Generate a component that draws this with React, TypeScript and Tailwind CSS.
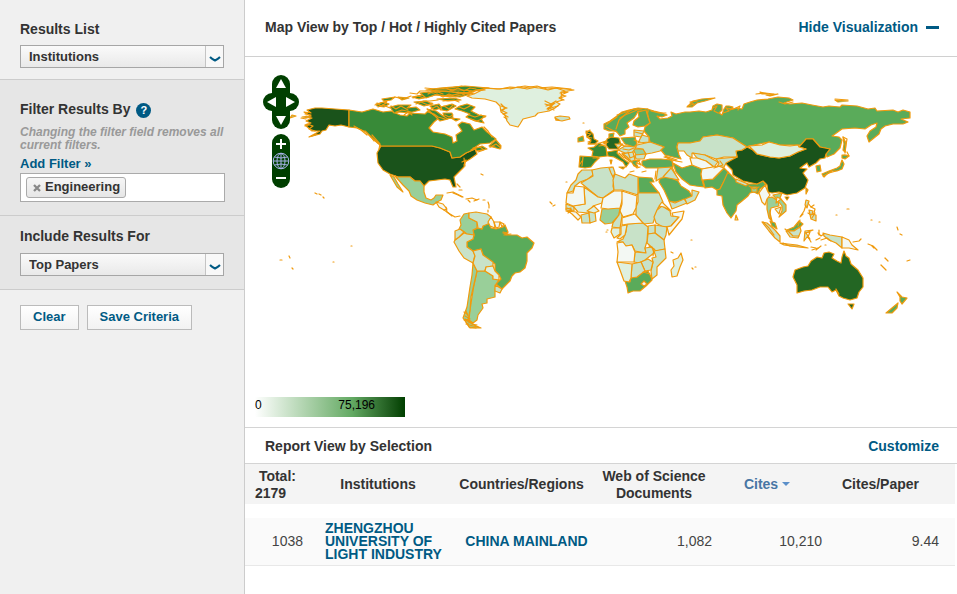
import { ChangeEvent, ReactNode, useState } from "react";

const TOP = "#1a531b";
const HIGH = "#236623";
const STRONG = "#388a38";
const MID = "#5aab5a";
const SOFT = "#99cf99";
const LIGHT = "#c8e2c8";
const PALE = "#dff0df";
const FAINT = "#f3f8f3";
const BORDER = "#f09a0c";

type Region = { fill: string; shapes: string[] };

const regions: Region[] = [
  {
    fill: MID,
    shapes: [
      // Russia
      "647,109 654,111 662,113 667,115 662,117 657,116 660,119 668,118 672,116 671,112 676,114 685,112 690,112 699,111 706,112 712,110 713,106 717,104 722,105 722,110 719,113 722,115 724,109 726,106 729,106 733,107 730,110 736,108 742,109 744,104 750,102 757,100 768,99 778,97 789,98 793,100 784,103 790,104 802,103 812,105 823,107 829,106 840,107 842,105 857,106 868,109 875,108 877,111 893,110 898,112 903,110 910,112 910,118 901,119 908,122 903,124 893,124 885,126 881,129 879,134 874,138 869,142 867,136 870,131 876,127 877,123 871,125 865,129 855,128 842,129 835,134 832,136 839,137 842,140 840,148 834,154 827,157 826,154 830,149 820,147 813,139 806,139 802,145 780,145 769,142 749,146 747,147 733,138 717,135 703,137 700,141 690,143 678,143 677,147 679,155 681,159 665,155 660,149 664,147 650,142 649,137 644,131 645,127 650,123 648,116",
      "687,107 693,101 702,99 715,98 705,101 697,103 692,107",
      "760,92 768,94 762,94", "766,95 778,94 770,96", "835,100 848,101 838,102",
      "843,137 846,143 845,152 843,150 844,144",
      // Scandinavia
      "604,124 610,121 617,116 622,112 629,110 638,108 648,109 648,112 638,111 636,115 634,118 627,123 629,127 625,130 625,134 620,136 616,131 609,131 604,129",
      "638,112 646,110 648,117 650,123 645,126 638,127 633,125 634,121 639,117",
      "609,134 614,133 613,138 609,138",
      // Poland, Ukraine side, Turkey
      "621,138 635,137 637,144 634,147 625,144",
      "642,161 650,159 661,159 672,160 673,167 664,168 655,168 646,168 642,165",
      // Egypt
      "638,177 652,178 654,182 650,182 659,193 639,193",
      // Saudi Arabia
      "660,178 669,177 678,181 681,186 689,191 692,196 688,199 675,202 669,201 664,190 659,182",
      // Iran
      "673,163 682,168 692,165 702,169 701,174 702,180 704,187 696,186 690,185 682,179 676,172",
      // Pakistan and India
      "703,180 713,179 721,171 724,168 728,172 729,178 723,183 720,189 717,190 712,187 705,188",
      "728,172 733,177 736,180 748,184 757,184 763,181 766,185 760,189 758,194 754,192 750,193 748,196 742,201 737,205 736,211 731,218 727,213 723,205 722,196 717,195 717,190 720,189 723,183",
      // Japan and Korea
      "842,155 846,155 849,156 845,159 842,158",
      "842,160 844,164 842,169 837,171 832,171 827,174 824,177 822,174 829,171 837,168 840,166",
      "816,166 820,165 821,171 817,172", "806,188 808,190 806,194",
      // Brazil
      "483,226 489,223 491,228 496,229 503,227 505,225 508,232 506,235 517,235 522,238 527,237 534,243 532,248 527,253 527,261 525,268 520,272 515,273 512,276 510,281 502,289 496,284 501,279 499,275 495,271 495,264 489,260 483,255 481,249 473,251 467,247 467,242 473,239 474,235 473,230 478,228 482,229",
      // South Africa
      "625,281 630,282 631,277 637,277 641,273 648,271 651,277 652,280 646,286 640,291 633,291 628,293 627,287",
      // New Zealand
      "897,292 902,297 907,298 902,304 900,301 900,297", "898,303 897,308 892,313 886,313 892,308",
      // Malaysia
      "770,221 775,223 777,229 772,226", "787,230 794,227 799,221 803,224 800,227 793,231",
      "578,138 583,136 584,141 578,142", "631,161 640,160 636,163 638,167 634,166",
    ],
  },
  {
    fill: TOP,
    shapes: [
      // Alaska
      "304,112 311,113 307,110 315,108 322,108 335,109 349,110 349,127 341,125 335,126 329,125 326,130 322,131 320,134 309,137 320,131 312,131 305,125 311,123 306,121 312,118 302,117 311,116",
      // Contiguous United States
      "381,146 432,146 440,148 450,152 452,158 460,157 466,153 475,149 477,154 470,159 465,162 464,167 459,172 454,177 456,187 453,187 450,180 445,179 437,180 429,181 424,186 420,181 415,181 410,177 398,177 390,174 383,170 378,163 377,153",
      // China
      "725,163 732,159 737,157 736,151 742,150 747,147 753,150 757,154 770,157 779,158 790,156 798,152 806,149 799,147 806,139 813,139 820,147 830,149 826,154 825,158 820,159 816,163 809,167 807,163 800,168 807,169 803,173 808,180 805,188 797,193 787,195 779,192 772,193 768,192 767,185 763,181 757,184 743,181 733,175 732,170",
      "785,197 789,197 787,200",
    ],
  },
  {
    fill: HIGH,
    shapes: [
      "795,270 803,267 808,266 811,261 817,257 822,258 824,253 829,252 834,254 832,258 837,261 841,263 842,257 844,251 846,256 849,258 851,264 858,270 863,278 863,287 859,292 857,298 850,300 843,298 839,296 836,290 832,292 828,287 820,287 812,290 804,291 797,293 797,285 793,277",
      "848,304 854,304 852,309",
      "607,139 611,137 619,138 621,145 618,149 609,149 606,145",
      "590,131 593,134 594,139 598,141 595,144 588,144 591,140 587,137 586,131",
    ],
  },
  {
    fill: STRONG,
    shapes: [
      // Canada
      "349,110 362,112 373,109 383,112 391,111 400,115 407,116 410,113 425,114 428,111 434,115 440,117 434,122 429,128 433,132 445,134 452,137 453,143 457,141 456,135 462,131 458,125 462,122 470,124 474,130 482,127 487,132 496,139 490,143 480,144 471,150 482,146 487,149 477,151 475,149 466,153 460,157 452,158 450,152 440,148 432,146 381,146 373,139 366,132 357,128 349,127",
      "489,146 496,140 501,146 500,149",
      // Baffin and the Arctic islands
      "460,106 467,104 475,107 471,111 479,115 486,116 481,119 484,123 475,121 466,117 470,114 462,111 455,109",
      "390,107 398,105 411,105 407,108 416,107 420,110 409,113 400,112 394,113",
      "376,104 384,102 389,104 384,107 377,106", "382,99 395,97 391,100 384,101", "398,97 409,98 402,100",
      "412,97 422,95 428,97 419,99", "414,102 426,101 433,104 424,106", "437,99 454,98 461,100 448,101",
      "420,93 438,91 452,92 462,94 448,96 435,95 426,98", "426,90 440,88 465,86 489,88 477,90 470,93 455,92 440,91",
      "446,96 465,93 474,93 460,97", "430,106 439,104 442,108 434,110", "441,107 452,104 456,106 447,111 442,110",
      "443,113 452,113 453,118 445,119", "427,109 436,111 443,116 448,119 440,121 435,116", "451,118 460,119 456,121",
      // France, Iberia, Italy
      "588,148 594,147 599,143 606,147 607,156 599,157 592,156 593,151",
      "580,156 596,157 599,158 595,162 591,167 585,168 579,167",
      "607,152 618,150 617,153 622,158 629,163 626,167 623,162 614,157 608,156",
      "610,160 612,160 611,164", "619,167 625,167 623,169",
    ],
  },
  {
    fill: SOFT,
    shapes: [
      // Mexico
      "395,176 398,177 410,177 415,181 420,181 424,186 424,192 426,198 431,200 434,198 436,195 443,195 441,200 437,202 433,205 425,203 417,200 411,196 409,191 403,185",
      "390,175 394,177 398,184 403,192 397,187",
      // Colombia
      "460,220 464,214 469,213 469,218 477,222 477,228 473,230 474,235 467,234 463,231 459,229 461,225",
      // Argentina
      "477,271 485,271 493,276 493,279 499,280 496,284 495,291 495,297 487,299 487,303 482,304 483,308 478,315 477,320 473,323 469,320 470,310 472,297 474,285",
      // Chile
      "473,263 477,271 474,284 471,297 470,310 468,320 474,325 481,328 470,328 463,318 467,307 470,287 472,275",
      // Nigeria, Thailand, Romania
      "602,209 620,208 619,215 612,223 605,224 600,220",
      "767,198 772,197 778,201 779,206 771,208 770,213 772,221 769,218 767,209",
      "633,149 643,149 646,154 636,155", "751,187 757,187 757,192 752,192",
      "306,116 311,117 306,118", "292,115 296,116 290,118",
      "773,195 782,193 780,198 786,205 786,211 779,217 782,211 782,206 778,201",
    ],
  },
  {
    fill: LIGHT,
    shapes: [
      // Kazakhstan and neighbours
      "677,147 678,143 690,143 700,141 703,137 717,135 733,138 747,147 742,150 736,151 737,157 724,157 716,159 705,155 697,154 692,153 692,158 687,155 684,151 678,151",
      "716,159 737,157 726,163 724,167 717,167 719,163",
      "693,153 705,155 718,162 714,167 706,161 697,158",
      // Morocco, Algeria, Tunisia, Libya
      "582,170 592,170 593,175 588,179 580,182 575,186 573,191 567,193 571,185 576,180 578,174",
      "592,170 601,168 612,167 612,173 614,180 613,186 614,190 603,198 598,197 581,183 593,176",
      "609,168 613,167 615,173 613,177 611,173",
      "615,174 625,178 629,174 638,177 638,195 622,190 614,190 613,180",
      // Sudan, Ethiopia, Kenya, Tanzania
      "638,193 659,193 663,202 658,208 656,214 653,223 643,224 636,215 636,207 638,202",
      "657,210 662,206 670,211 671,216 679,217 671,226 663,227 656,223 654,217",
      "655,225 667,227 666,235 664,240 655,233", "648,226 655,225 655,233 648,234",
      "648,234 655,233 664,240 665,249 656,251 647,243",
      // DR Congo
      "627,224 643,223 648,227 647,241 645,248 646,253 635,251 632,245 625,246 623,242 617,242 623,239 626,232",
      "635,252 646,253 645,248 652,247 654,253 645,260 639,263 634,262",
      "654,251 665,249 666,258 657,267 657,275 652,279 651,271 653,262 652,258 656,257",
      "641,262 648,259 653,262 651,270 645,271", "632,264 641,262 645,271 637,277 631,278",
      "581,215 589,213 590,223 582,223", "589,212 595,212 596,221 590,223",
      "620,208 622,216 620,228 612,227 613,223 619,215", "566,204 574,207 574,211 566,210",
      // Levant, Iraq, Yemen, Oman
      "658,168 672,167 678,180 669,177 661,178 656,181", "663,177 671,168 679,180",
      "669,201 675,203 684,199 687,203 672,209", "692,190 699,192 695,200 687,204 685,199 692,196",
      // Eastern Europe
      "637,145 650,142 664,147 660,151 652,153 646,154 643,149 635,148", "642,135 649,137 649,142 638,143",
      "634,130 644,131 641,137 634,136", "618,150 625,146 636,147 632,153 625,153", "622,154 633,152 635,160 630,162",
      "635,155 646,154 644,159 636,159", "615,144 623,144 618,148",
      "665,156 677,160 672,161",
      // Peru, Bolivia, Venezuela
      "455,240 459,237 464,233 467,234 474,235 473,239 467,242 467,247 473,251 475,255 473,263 464,258 459,251 454,242",
      "455,231 460,229 464,232 459,237 455,240",
      "473,251 481,249 483,255 493,262 493,266 486,267 485,271 477,271 473,263 475,256",
      "469,213 476,212 487,214 491,217 488,224 483,226 482,229 478,228 477,222 469,218",
      "495,285 502,289 500,293 495,291",
      // Indonesia and the Philippines
      "762,222 767,223 775,230 780,236 780,242 775,238 769,231", "780,243 788,244 797,245 808,248 798,247 784,245",
      "786,231 794,231 800,227 801,231 798,238 790,237", "805,231 813,230 806,233 810,239 807,237 804,241",
      "823,233 830,235 842,237 842,248 836,243 829,240 824,236",
      "806,200 809,201 807,208 805,205", "809,210 813,211 812,214 816,215 816,221 811,219",
      "555,117 560,116 569,117 570,119 562,121 556,120", "736,215 738,220 735,220", "736,179 748,184 746,186 736,182",
    ],
  },
  {
    fill: PALE,
    shapes: [
      // Greenland
      "467,96 474,94 480,91 487,88 500,89 510,87 523,88 537,86 547,89 557,88 574,90 561,92 562,96 559,98 563,100 556,102 560,104 555,108 549,111 538,113 535,116 523,119 520,124 518,127 510,125 507,121 505,115 501,112 500,106 496,102 485,99 472,98",
      // Mongolia
      "749,146 762,145 769,142 780,145 790,146 798,145 799,147 806,149 798,152 790,156 779,158 770,157 757,154 753,150",
      "584,187 598,197 603,198 602,203 593,206 588,213 578,212 573,206 585,204",
      "617,262 632,264 631,278 629,282 624,281 620,270",
      "681,253 683,260 680,267 677,276 672,277 671,270 674,266 673,260 678,258",
      "612,228 620,228 620,234 614,238 611,232", "493,276 485,271 486,267 493,266 495,271 499,275 499,280 493,279",
      "775,209 781,207 779,214", "621,226 627,225 625,235 620,239 617,238 621,234", "587,211 594,206 599,211 594,213",
    ],
  },
  {
    fill: FAINT,
    shapes: [
      "575,186 584,187 585,204 573,206 566,203 567,193 573,193",
      "603,198 614,191 622,191 623,197 620,208 608,209 601,208",
      "622,191 637,196 636,208 633,214 623,217 620,211 622,204",
      "622,218 635,214 643,223 628,224 622,225", "617,243 623,242 626,246 632,245 635,252 634,262 617,262 618,252",
      "672,213 684,211 682,219 669,235 667,227 671,226 679,217 673,216",
      "690,158 697,158 706,161 714,167 702,169 692,165", "702,169 718,166 724,168 721,171 713,179 702,180 701,174",
      "759,193 765,185 768,192 770,195 767,199 765,205 762,202", "842,237 849,240 852,245 858,250 849,248 842,248",
      "491,217 494,222 495,228 490,226 488,222", "494,222 500,222 499,227 496,228", "500,222 504,224 502,227",
      "436,202 443,204 447,209 444,210 439,207", "641,284 644,281 647,284 644,286", "659,206 662,202 671,211 664,207",
      "568,211 576,212 581,217 578,220 572,214", "776,203 781,199 777,197",
    ],
  },
];

// Borders and island specks that carry no fill of their own
const specks: string[] = [
  "315,193 317,194", "319,194 321,195", "323,197 324,198", "481,174 483,175", "457,184 460,187", "459,190 462,190",
  "447,193 453,192 459,195 463,197", "453,193 458,195 462,197", "466,199 472,198 477,200", "474,201 479,199", "468,200 470,202", "483,200 485,200",
  "488,202 489,205 489,208", "488,210 488,212", "444,210 450,214 455,217 460,216", "446,207 447,212 452,216",
  "351,246 352,246", "289,256 290,258", "280,260 282,260", "333,262 334,262", "292,268 293,269",
  "550,202 552,204", "553,206 555,205", "566,182 567,182", "566,209 571,208 570,212 567,211", "566,211 570,212",
  "583,123 584,123", "583,157 582,166", "593,158 599,158", "607,230 608,230", "606,232 607,232", "691,240 692,240", "671,252 673,253", "692,268 693,269", "695,267 696,267",
  "806,205 804,211 800,217", "803,214 801,216", "811,207 815,209 814,213", "847,209 849,209", "836,215 837,215", "871,220 872,220", "879,222 880,222",
  "897,227 898,230", "900,234 902,235", "868,244 873,246 877,250", "872,246 874,248", "881,265 886,270", "885,258 888,261", "907,261 910,260",
  "819,230 819,235", "816,240 820,238", "811,247 816,248", "821,240 827,238 831,241", "853,242 859,241 861,239", "825,245 826,245", "816,250 821,246",
  "756,94 765,93 774,94", "835,99 848,100", "843,137 847,139 846,145 845,153", "844,155 849,156 847,152",
  "372,135 380,144 379,149", "365,131 371,137 374,141", "354,126 361,130 367,135", "371,137 378,143",
  "467,94 476,90 484,89", "484,88 497,89 512,88 525,86 538,88 552,87 571,89", "501,106 507,108 501,110 507,113 503,114 508,117",
  "560,93 568,92 561,95 566,96 560,98 564,100", "546,106 555,103 547,109 558,106", "504,117 507,119", "545,104 552,106 548,110",
  "465,316 470,319 464,320 471,322 466,324 473,326 478,327", "466,322 469,327 476,328", "464,312 467,314",
  "503,233 507,234 504,235 511,234", "617,115 626,112 634,109 642,110", "617,117 611,121 606,125", "616,129 619,120 627,113 631,110",
  "651,111 659,113 666,113", "375,105 381,103 387,101 385,104", "395,97 403,99 411,96", "410,93 417,94 420,91 428,91", "428,94 436,90 446,90 455,89",
  "423,101 430,101 438,100", "425,88 436,89 450,88 462,86", "440,95 450,97 462,95 470,92", "450,90 462,90 474,91 485,90", "443,101 454,100 459,102",
  "555,118 559,120 556,120", "305,126 309,125", "301,118 306,119", "312,136 317,134", "582,161 580,164",
  "770,210 770,217 772,222", "800,220 798,226", "836,289 839,294", "464,158 465,166", "490,147 495,146", "599,146 606,145", "600,143 606,141",
  "664,157 670,159 676,161 682,162", "637,163 641,165 638,160", "642,172 646,171", "630,172 634,171", "656,171 655,179", "714,168 723,165 720,161",
];

// Short strokes that break up the most indented coasts
const inlets: string[] = [
  "428,92 433,93 438,92 443,94", "446,88 452,91 458,88 464,91 470,88 476,89", "432,96 437,94 443,97 449,94 456,97", "458,92 464,94 471,91",
  "377,103 381,106 386,103", "378,107 383,105 390,108", "391,106 396,109 401,106 408,110", "396,112 402,110 411,112", "404,115 408,112 412,115",
  "413,98 418,96 424,98", "416,104 421,102 428,105 432,103", "431,109 437,106 441,110", "444,106 449,109 453,105", "428,112 434,114 438,117 445,119",
  "459,107 464,109 470,106", "469,115 475,117 481,115 485,117", "471,119 477,121 482,119", "445,115 449,117 453,115",
  "473,148 480,147 484,150 478,152", "490,147 496,144 501,148", "462,162 466,160 464,165", "484,127 488,131 492,137",
  "590,130 586,133 591,134 587,137 592,138", "588,142 591,141 589,144 597,144", "603,143 606,141 604,144 608,142",
  "619,143 624,146 630,146", "623,149 629,150 634,148", "622,153 627,157 631,161", "628,152 630,158 635,156", "634,140 640,142",
  "635,132 643,134", "606,127 612,130 617,132", "620,118 625,115 630,113 637,110", "634,165 637,168 640,167", "619,153 623,157 629,160",
  "785,229 789,232 793,236 799,236", "783,243 790,246 799,246", "805,233 810,232 808,237 811,242", "812,250 818,248", "808,203 811,207 814,205",
  "808,213 811,215 815,213 812,218", "818,233 821,236 824,234", "713,108 717,106 714,111 718,113", "723,113 729,111 726,108 734,109",
  "736,108 740,106 738,110", "779,102 785,104 793,102", "688,106 694,104 690,102 697,101", "823,176 829,173 836,171",
  "466,311 468,316", "465,319 472,324 477,325", "503,232 508,233", "309,112 305,114 311,115", "307,124 313,126 309,129 315,131",
  "545,101 551,104 556,101", "548,108 554,110", "501,104 505,108 502,111", "510,89 518,87 527,89 537,87", "540,88 548,90 556,88 565,91",
  "567,208 572,210 568,213", "649,246 654,249 653,256", "643,272 650,274", "749,186 754,189 759,187", "763,222 769,228 774,235",
];

const pressableLink = "font-bold text-[#005a84] hover:underline";

function WorldMap() {
  return (
    <svg viewBox="245 57 712 370" className="block h-auto w-full" role="img" aria-label="World map of papers by country">
      <g stroke={BORDER} strokeWidth="1.2" strokeLinejoin="round" strokeLinecap="round">
        {regions.map((region) =>
          region.shapes.map((points) => <polygon key={points} points={points} fill={region.fill} />),
        )}
        {[...specks, ...inlets].map((points) => (
          <polyline key={points} points={points} fill="none" />
        ))}
      </g>
    </svg>
  );
}

function MapButton({ label, className, children }: { label: string; className: string; children: ReactNode }) {
  return (
    <button type="button" aria-label={label} className={`flex items-center justify-center bg-[#003f00] ${className}`}>
      <svg viewBox="0 0 18 18" className="size-[18px]" aria-hidden="true">
        {children}
      </svg>
    </button>
  );
}

function MapControls() {
  return (
    <div className="absolute top-[18px] left-[18px] flex flex-col items-center gap-[5px]">
      <div className="flex flex-col items-center">
        <MapButton label="Pan up" className="rounded-t-full">
          <path d="M9 4 14 13H4Z" fill="#fff" />
        </MapButton>
        <div className="flex overflow-hidden rounded-full">
          <MapButton label="Pan left" className="">
            <path d="M4 9 13 4V14Z" fill="#fff" />
          </MapButton>
          <MapButton label="Pan right" className="">
            <path d="M14 9 5 4V14Z" fill="#fff" />
          </MapButton>
        </div>
        <MapButton label="Pan down" className="rounded-b-full">
          <path d="M9 14 14 5H4Z" fill="#fff" />
        </MapButton>
      </div>
      <div className="flex flex-col">
        <MapButton label="Zoom in" className="rounded-t-full">
          <path d="M4 10H14M9 5V15" stroke="#fff" strokeWidth="2" />
        </MapButton>
        <MapButton label="Show whole world" className="">
          <g fill="none" stroke="#a9b4ea" strokeWidth="1">
            <circle cx="9" cy="9" r="7.8" />
            <ellipse cx="9" cy="9" rx="4" ry="7.5" />
            <path d="M9 1V17M1 9H17M2.500 5Q9 7 15.500 5M2.500 13Q9 11 15.500 13" />
          </g>
        </MapButton>
        <MapButton label="Zoom out" className="rounded-b-full">
          <path d="M4 8H14" stroke="#fff" strokeWidth="2" />
        </MapButton>
      </div>
    </div>
  );
}

function Picker({ id, options }: { id: string; options: string[] }) {
  const [value, setValue] = useState(options[0]);
  return (
    <div className="relative">
      <select
        id={id}
        value={value}
        onChange={(event: ChangeEvent<HTMLSelectElement>) => setValue(event.target.value)}
        className="block h-[23px] w-full appearance-none border border-[#a6a6a6] bg-linear-to-b from-[#fafafa] to-[#e9e9e9] pt-px pr-6 pl-2 text-[13px] leading-5 font-bold text-[#333]"
      >
        {options.map((option) => (
          <option key={option}>{option}</option>
        ))}
      </select>
      <span className="pointer-events-none absolute inset-y-px right-px flex w-[18px] items-center justify-center border-l border-[#c4c4c4] bg-[#f8f8f8]">
        <svg viewBox="0 0 12 8" className="mt-1 h-2 w-3" aria-hidden="true">
          <path d="M1 2Q3 4 6 5.500Q9 4 11 2" fill="none" stroke="#005a84" strokeWidth="2" />
        </svg>
      </span>
    </div>
  );
}

function Sidebar() {
  return (
    <aside className="w-[245px] shrink-0 border-r border-[#ccc] bg-[#f0f0f0]">
      <section className="border-b border-[#ccc] px-5 pt-5 pb-[11px]">
        <label htmlFor="results-list" className="mb-[7px] block leading-[18px] font-bold">
          Results List
        </label>
        <Picker id="results-list" options={["Institutions", "Authors", "Countries/Regions"]} />
      </section>

      <section className="border-b border-[#ccc] bg-[#e6e6e6] pt-5 pr-[19px] pb-[13px] pl-5">
        <div className="flex items-start gap-[6px]">
          <h2 className="leading-[18px] font-bold">Filter Results By</h2>
          <button
            type="button"
            aria-label="Help"
            className="mt-[3px] size-[15px] rounded-full bg-[#005a84] text-[11px] leading-[15px] font-bold text-white"
          >
            ?
          </button>
        </div>
        <p className="mt-2 text-xs leading-[13px] font-bold text-[#999] italic">
          Changing the filter field removes all current filters.
        </p>
        <a href="#add-filter" className={`mt-[3px] block w-fit text-[13px] leading-[18px] ${pressableLink}`}>
          Add Filter »
        </a>
        <div className="border border-[#aaa] bg-white p-[3px] pl-[5px]">
          <button
            type="button"
            aria-label="Remove Engineering"
            className="flex h-[21px] items-center gap-1 rounded-[3px] border border-[#aaa] bg-linear-to-b from-[#f6f6f6] to-[#e6e6e6] pr-[5px] pl-1.5 text-[13px] font-bold"
          >
            <svg viewBox="0 0 8 8" className="mt-px size-2" aria-hidden="true">
              <path d="M1 1 7 7M7 1 1 7" stroke="#888" strokeWidth="2.300" />
            </svg>
            Engineering
          </button>
        </div>
      </section>

      <section className="border-b border-[#ccc] bg-[#e6e6e6] px-5 pt-[11px] pb-[13px]">
        <label htmlFor="include-results" className="mb-2 block leading-[18px] font-bold">
          Include Results For
        </label>
        <Picker id="include-results" options={["Top Papers", "Hot Papers", "Highly Cited Papers"]} />
      </section>

      <div className="flex gap-2 px-5 pt-[15px]">
        {["Clear", "Save Criteria"].map((label) => (
          <button
            key={label}
            type="button"
            className="h-[25px] border border-[#bbb] bg-linear-to-b from-white to-[#f2f2f2] px-3 text-[13px] font-bold text-[#005a84]"
          >
            {label}
          </button>
        ))}
      </div>
    </aside>
  );
}

function ReportTable() {
  return (
    <table className="w-full table-fixed border-collapse">
      <colgroup>
        <col className="w-[70px]" />
        <col className="w-[132px]" />
        <col className="w-[149px]" />
        <col className="w-[116px]" />
        <col className="w-[110px]" />
        <col className="w-[133px]" />
      </colgroup>
      <thead>
        <tr className="h-10 bg-[#f4f4f4] leading-[17px]">
          <th className="pt-[2px] pl-[10px] text-left">
            {"\u00a0"}Total:
            <br />
            2179
          </th>
          <th className="pr-[6px]">Institutions</th>
          <th>Countries/Regions</th>
          <th className="pt-[2px]">
            Web of Science
            <br />
            Documents
          </th>
          <th>
            <button type="button" className="inline-flex items-center gap-1 font-bold text-[#4876a4]">
              Cites
              <svg viewBox="0 0 8 4" className="h-1 w-2" aria-hidden="true">
                <path d="M0 0H8L4 4Z" fill="#5b8fc9" />
              </svg>
            </button>
          </th>
          <th className="pr-4">Cites/Paper</th>
        </tr>
      </thead>
      <tbody>
        <tr aria-hidden="true" className="h-[14px]">
          <td colSpan={6} />
        </tr>
        <tr className="h-[47px] border-b border-[#e8e8e8] bg-[#fafafa] leading-[13px] text-[#444]">
          <td className="pr-3 text-right">1038</td>
          <td className="pl-[10px]">
            <a href="#institution" className={pressableLink}>
              ZHENGZHOU UNIVERSITY OF LIGHT INDUSTRY
            </a>
          </td>
          <td className="pl-[10px] text-center">
            <a href="#country" className={pressableLink}>
              CHINA MAINLAND
            </a>
          </td>
          <td className="text-right">1,082</td>
          <td className="text-right">10,210</td>
          <td className="pr-4 text-right">9.44</td>
        </tr>
      </tbody>
    </table>
  );
}

export default function App() {
  return (
    <div className="flex min-h-screen bg-white font-['Liberation_Sans',Arial,sans-serif] text-sm text-[#333]">
      <Sidebar />
      <main className="min-w-0 flex-1">
        <header className="flex h-[57px] items-center justify-between border-b border-[#d0d0d0] pr-[18px] pb-[2px] pl-5">
          <h1 className="font-bold">Map View by Top / Hot / Highly Cited Papers</h1>
          <button type="button" className={`flex items-center gap-2 ${pressableLink}`}>
            Hide Visualization
            <span className="h-[3px] w-[13px] bg-[#005a84]" />
          </button>
        </header>

        <section className="relative" aria-label="Map">
          <WorldMap />
          <MapControls />
          <div className="absolute bottom-[10px] left-[10px] flex h-5 w-[150px] items-start justify-between bg-linear-to-r from-white via-[#62a962] via-65% to-[#003f00] pr-[30px] text-xs leading-4 text-black">
            <span>0</span>
            <span>75,196</span>
          </div>
        </section>

        <section aria-label="Report">
          <div className="flex h-[37px] items-center justify-between border-y border-[#d4d4d4] pr-[18px] pl-5">
            <h2 className="font-bold">Report View by Selection</h2>
            <a href="#customize" className={pressableLink}>
              Customize
            </a>
          </div>
          <div className="pr-[2px]">
            <ReportTable />
          </div>
        </section>
      </main>
    </div>
  );
}
